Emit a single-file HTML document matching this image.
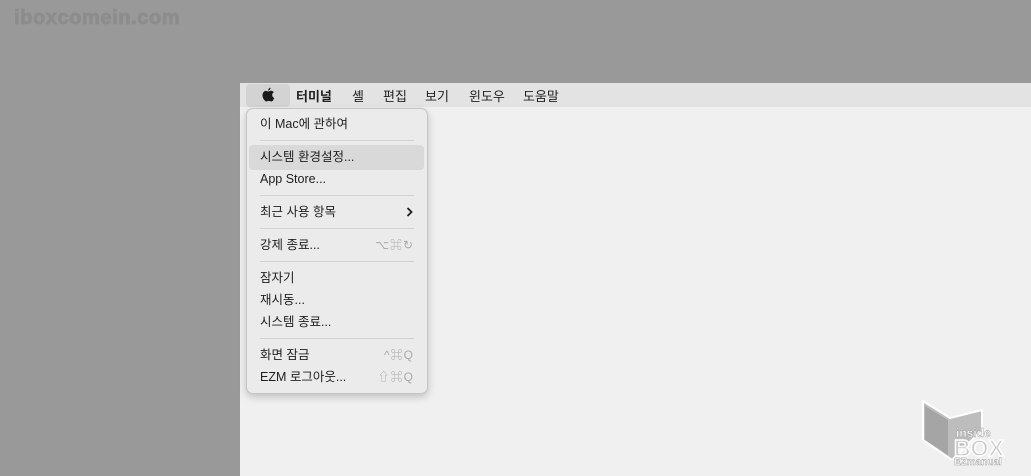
<!DOCTYPE html>
<html><head><meta charset="utf-8"><style>
body{margin:0;width:1031px;height:476px;background:#999;position:relative;overflow:hidden;font-family:"Liberation Sans","Noto Sans CJK KR",sans-serif;}
.screen{position:absolute;left:240px;top:83px;width:791px;height:393px;background:#f0f0f0;}
.bar{position:absolute;left:240px;top:83px;width:791px;height:24px;background:#e3e3e3;font-size:13px;color:#222;}
.bar span{position:absolute;top:3px;}
.apple{position:absolute;left:246px;top:84px;width:44px;height:23px;background:#d3d3d3;border-radius:4px;}
.menu{position:absolute;left:246px;top:108px;width:180px;height:284px;background:#ebebeb;border:1px solid #c4c4c4;border-radius:7px;box-shadow:0 3px 8px rgba(0,0,0,.2);}
.it{position:absolute;left:260px;font-size:12.5px;color:#1e1e1e;line-height:16px;}
.sc{position:absolute;right:617px;font-size:12px;color:#aaa;line-height:16px;letter-spacing:1px;}
.sep{position:absolute;left:260px;width:154px;height:1px;background:#d2d2d2;}
.hl{position:absolute;left:249px;top:145px;width:175px;height:25px;background:#d9d9d9;border-radius:4px;}
.wm{position:absolute;left:14px;top:7px;font-size:20px;font-weight:bold;color:#8c8c8c;letter-spacing:0.6px;-webkit-text-stroke:0.8px #8c8c8c;}
</style></head><body>
<div class="wm">iboxcomein.com</div>
<div class="screen"></div>
<div class="bar">
<span style="left:56px;font-weight:bold">터미널</span>
<span style="left:112px">셸</span>
<span style="left:143px">편집</span>
<span style="left:185px">보기</span>
<span style="left:229px">윈도우</span>
<span style="left:283px">도움말</span>
</div>
<div class="apple"></div>
<svg style="position:absolute;left:261px;top:87px" width="14" height="16" viewBox="0 0 14 16"><path d="M7 4.5C8 4.5 9 3.8 10 3.8c1.3 0 2.3.7 2.8 1.5-1.3.8-1.700 2-1.6 3 .1 1.3.9 2.3 2 2.7-.4 1.2-1.5 3.5-2.8 3.5-1 0-1.3-.6-2.5-.6s-1.6.6-2.5.6C4 14.5 1.5 11.5 1.5 8.3 1.5 5.6 3.2 3.9 5 3.9c1 0 1.4.6 2 .6z M7.2 3.6C7 2.3 8.2.8 9.5.6c.2 1.4-1 2.9-2.3 3z" fill="#1a1a1a"/></svg>
<div class="menu"></div>
<div class="hl"></div>
<div class="it" style="top:116px">이 Mac에 관하여</div>
<div class="sep" style="top:140px"></div>
<div class="it" style="top:149px">시스템 환경설정...</div>
<div class="it" style="top:171px">App Store...</div>
<div class="sep" style="top:195px"></div>
<div class="it" style="top:204px">최근 사용 항목</div>
<svg style="position:absolute;left:406px;top:207px" width="7" height="10" viewBox="0 0 7 10"><path d="M1.5 1L5.5 5 1.5 9" fill="none" stroke="#1e1e1e" stroke-width="1.8"/></svg>
<div class="sep" style="top:228px"></div>
<div class="it" style="top:237px">강제 종료...</div>
<div class="sc" style="top:237px">⌥⌘↻</div>
<div class="sep" style="top:261px"></div>
<div class="it" style="top:270px">잠자기</div>
<div class="it" style="top:292px">재시동...</div>
<div class="it" style="top:314px">시스템 종료...</div>
<div class="sep" style="top:338px"></div>
<div class="it" style="top:347px">화면 잠금</div>
<div class="sc" style="top:347px">^⌘Q</div>
<div class="it" style="top:369px">EZM 로그아웃...</div>
<div class="sc" style="top:369px">⇧⌘Q</div>
<svg style="position:absolute;left:920px;top:398px" width="105" height="72" viewBox="0 0 105 72">
<path d="M3 3 L30 20 L62 12 L62 32 L32 62 L3 42 Z" fill="#bdbdbd" stroke="#fff" stroke-width="2"/>
<path d="M5 8 L28 22 L28 57 L5 42 Z" fill="#a5a5a5"/>
<text x="36" y="39" font-family="Liberation Sans" font-weight="bold" font-size="12" fill="#fff" stroke="#999" stroke-width="0.4">inside</text>
<text x="34" y="58" font-family="Liberation Sans" font-weight="bold" font-size="23" fill="#c8c8c8" stroke="#fff" stroke-width="1.5">BOX</text>
<text x="34" y="67" font-family="Liberation Sans" font-weight="bold" font-size="10" fill="#fff" stroke="#999" stroke-width="0.4">EZmanual</text>
</svg>
</body></html>
